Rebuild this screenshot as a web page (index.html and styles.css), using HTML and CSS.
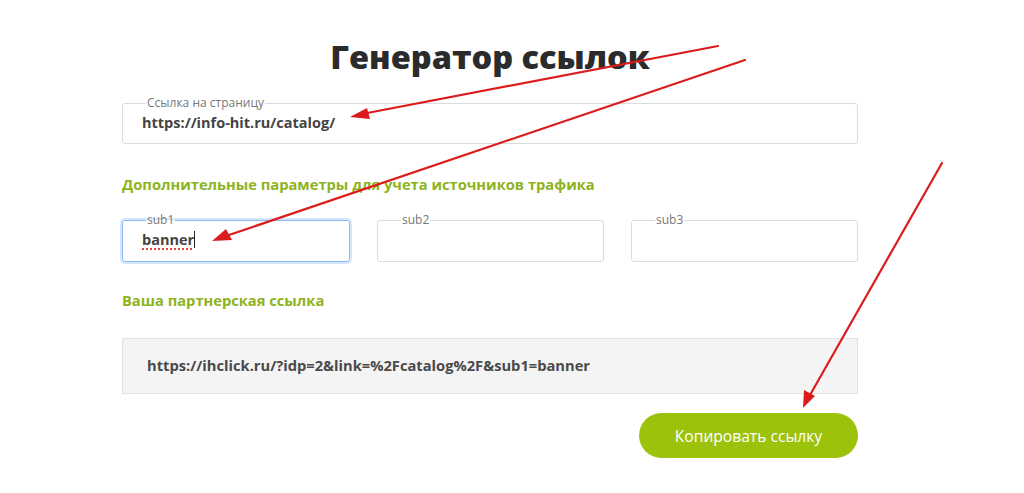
FILE: index.html
```html
<!DOCTYPE html>
<html lang="ru">
<head>
<meta charset="utf-8">
<link rel="stylesheet" href="styles.css">
</head>
<body>
<main class="gen">
  <h1 class="title">Генератор ссылок</h1>
  <fieldset class="field field-wide">
    <legend class="legend">Ссылка на страницу</legend>
    <div class="value">https://info-hit.ru/catalog/</div>
  </fieldset>
  <h2 class="sub-title sub-title-params">Дополнительные параметры для учета источников трафика</h2>
  <div class="subs">
    <fieldset class="field field-focus">
      <legend class="legend">sub1</legend>
      <div class="value"><span class="misspelled">banner</span><span class="caret"></span></div>
    </fieldset>
    <fieldset class="field">
      <legend class="legend">sub2</legend>
      <div class="value"></div>
    </fieldset>
    <fieldset class="field">
      <legend class="legend">sub3</legend>
      <div class="value"></div>
    </fieldset>
  </div>
  <h2 class="sub-title sub-title-result">Ваша партнерская ссылка</h2>
  <div class="result">https://ihclick.ru/?idp=2&amp;link=%2Fcatalog%2F&amp;sub1=banner</div>
  <div class="actions">
    <button class="copy-btn" type="button">Копировать ссылку</button>
  </div>
</main>
<svg class="arrows" width="1024" height="493" viewBox="0 0 1024 493">
  <g stroke="#dc1c1c" stroke-width="2.2" stroke-linecap="round">
    <line x1="718" y1="46" x2="362" y2="114"/>
    <line x1="745" y1="60" x2="226" y2="236"/>
    <line x1="942" y1="163" x2="810" y2="395"/>
  </g>
  <g fill="#dc1c1c">
    <polygon points="350,117 367,108 370,119"/>
    <polygon points="212,241 226,229 232,240"/>
    <polygon points="803,408 804,390 815,396"/>
  </g>
</svg>
</body>
</html>
```
FILE: styles.css
```css
html, body {
  margin: 0;
  padding: 0;
  background: #fff;
}
body {
  font-family: "Open Sans", "Liberation Sans", sans-serif;
  color: #444;
  position: relative;
  width: 1024px;
  height: 493px;
  overflow: hidden;
}
.gen {
  width: 736px;
  margin-left: 122px;
  display: flex;
  flex-direction: column;
}
.title {
  margin: 33px 0 0;
  font-size: 32.5px;
  line-height: 48px;
  font-weight: 800;
  color: #2b2b2b;
  text-align: center;
  letter-spacing: 0;
}
.field {
  margin: 0;
  padding: 0 18px 0 18px;
  border: 1px solid #dcdcdc;
  border-radius: 3px;
  min-width: 0;
  box-sizing: border-box;
  height: 47px;
}
.field-wide {
  margin-top: 16px;
}
.legend {
  font-size: 12px;
  line-height: 12px;
  color: #777;
  padding: 0 1px;
  margin-left: 5px;
}
.value {
  font-size: 14.5px;
  font-weight: 700;
  color: #444;
  line-height: 20px;
  padding: 4px 0 0 1px;
  height: 24px;
}
.sub-title {
  margin: 0;
  font-size: 14.7px;
  font-weight: 700;
  color: #8db31d;
  line-height: 20px;
}
.sub-title-params {
  margin-top: 30px;
}
.subs {
  margin-top: 20px;
  display: grid;
  grid-template-columns: 228px 227px 227px;
  column-gap: 27px;
}
.subs .field {
  height: 48px;
}
.field-focus {
  border-color: #8cbaf0;
  box-shadow: 0 0 0 2px #d6e7fb;
}
.misspelled {
  text-decoration: underline dotted #e04545 2px;
  text-underline-offset: 3px;
}
.caret {
  display: inline-block;
  width: 1px;
  height: 17px;
  background: #222;
  vertical-align: -3px;
}
.sub-title-result {
  margin-top: 28px;
}
.result {
  margin-top: 28px;
  height: 56px;
  box-sizing: border-box;
  background: #f4f4f4;
  border: 1px solid #e2e2e2;
  font-size: 14.7px;
  font-weight: 700;
  color: #4a4a4a;
  display: flex;
  align-items: center;
  padding: 0 0 2px 24px;
}
.actions {
  display: flex;
  justify-content: flex-end;
  margin-top: 19px;
}
.copy-btn {
  width: 219px;
  height: 45px;
  border: none;
  border-radius: 23px;
  background: #9dc20c;
  color: #fff;
  font-family: "Open Sans", "Liberation Sans", sans-serif;
  font-size: 15.6px;
  font-weight: 400;
  padding: 0;
}
.arrows {
  position: absolute;
  left: 0;
  top: 0;
  pointer-events: none;
}
```
